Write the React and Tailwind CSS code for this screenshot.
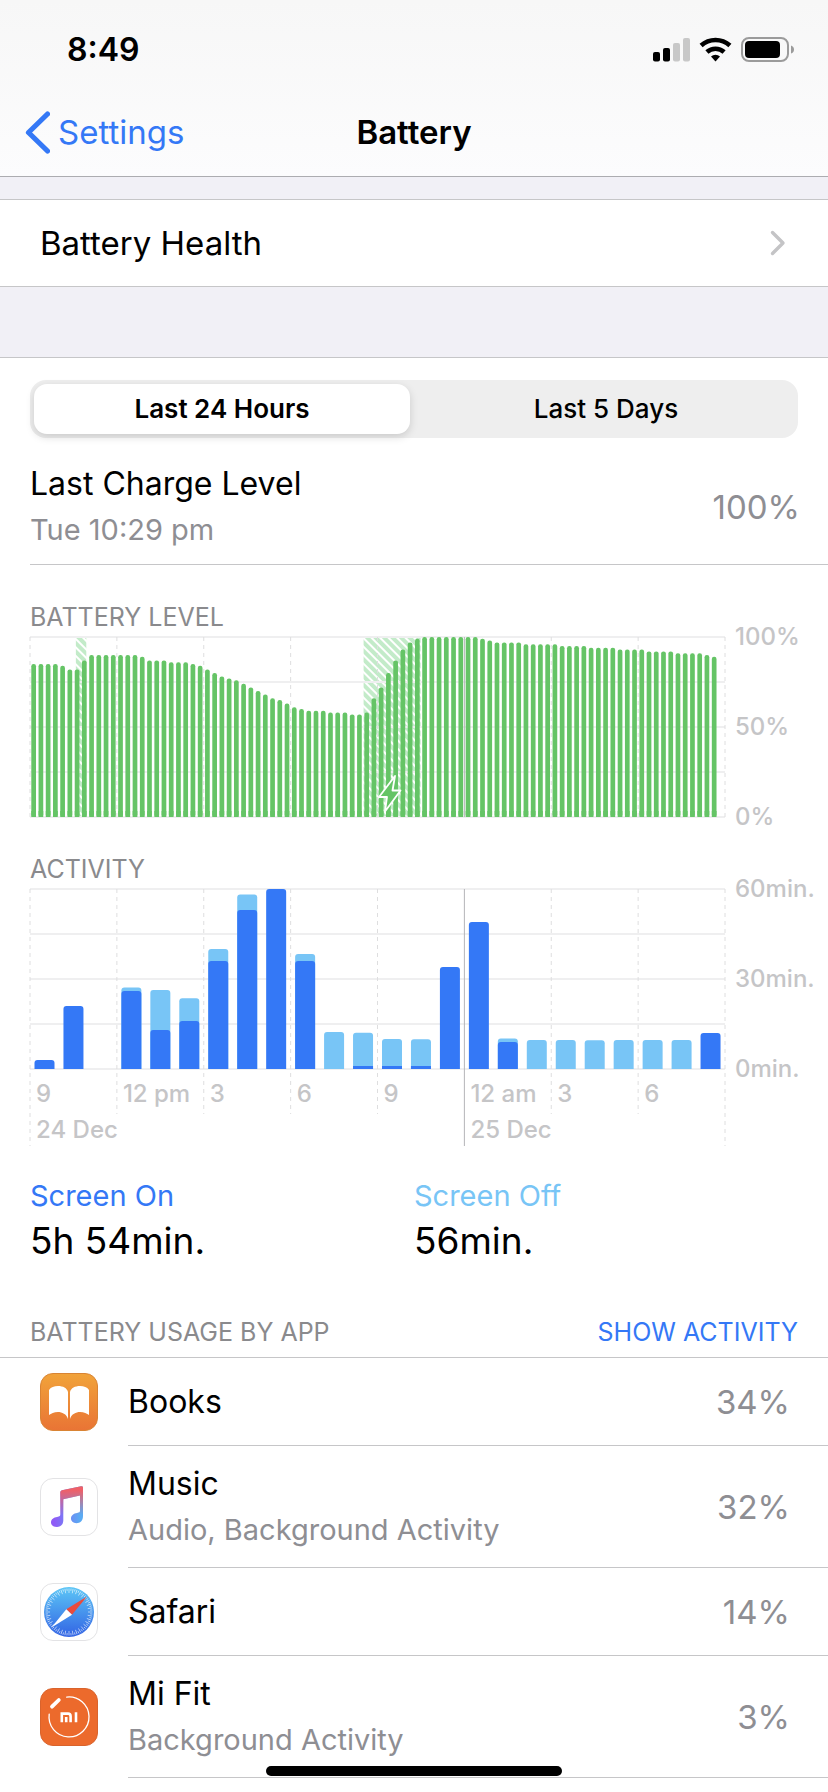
import { useState } from 'react'

// one reading every 15 minutes
const LEVELS = [
  85, 85, 85, 85, 84, 82, 82, 87, 90, 90, 90, 90, 90, 90, 90, 89,
  87, 87, 87, 86, 86, 86, 85, 84, 82, 80, 78, 77, 76, 74, 72, 70,
  68, 66, 65, 63, 61, 60, 59, 59, 59, 58, 58, 58, 57, 57, 58, 66,
  72, 80, 87, 93, 97, 99, 100, 100, 100, 100, 100, 100, 100, 100, 99, 98,
  97, 97, 97, 97, 96, 96, 96, 96, 96, 95, 95, 95, 95, 94, 94, 94,
  94, 93, 93, 93, 93, 92, 92, 92, 92, 91, 91, 91, 91, 90, 89,
]

// [screen on, total] minutes per hour
const ACTIVITY = [
  [3, 3], [21, 21], [0, 0], [26, 27.2], [13, 26.3], [16, 23.6],
  [36, 40], [53, 58.2], [60, 60], [36, 38.3], [0, 12.3], [1, 12.1],
  [1, 10], [1, 9.9], [34, 34], [49, 49], [9, 10.2], [0, 9.7],
  [0, 9.7], [0, 9.6], [0, 9.7], [0, 9.7], [0, 9.7], [12, 12],
]

const HOURS = ['9', '12 pm', '3', '6', '9', '12 am', '3', '6']
const PLOT_H = 180

function GridLines({ tick, edge }) {
  return (
    <g>
      {[0, 1, 2, 3, 4].map((i) => (
        <line key={i} x1="0" x2="100%" y1={i * 45} y2={i * 45} stroke="#efeff0" strokeWidth="2" />
      ))}
      {[0, 1, 2, 3, 4, 6, 7, 8].map((i) => (
        <line
          key={i}
          x1={`${i * 12.5}%`}
          x2={`${i * 12.5}%`}
          y1="0"
          y2={i % 8 === 0 ? edge : tick}
          stroke="#dededf"
          strokeDasharray="4 4"
        />
      ))}
      <line x1="62.5%" x2="62.5%" y1="0" y2={edge} stroke="#b4b4b8" />
    </g>
  )
}

function YLabels({ labels }) {
  return (
    <div className="-my-[14px] flex h-[208px] w-[103px] shrink-0 flex-col justify-between pl-[10px] text-[24px] leading-7 font-medium text-[#c5c5c7]">
      {labels.map((label) => <span key={label}>{label}</span>)}
    </div>
  )
}

function LevelChart() {
  return (
    <div className="mt-1 flex items-start">
      <svg className="h-[180px] min-w-0 flex-1 overflow-visible" role="img" aria-label="Battery level">
        <defs>
          <pattern id="hatch" width="6" height="6" patternUnits="userSpaceOnUse" patternTransform="rotate(-45)">
            <rect width="6" height="6" fill="#c3ebc9" />
            <rect width="2" height="6" fill="#fff" />
          </pattern>
        </defs>
        <rect x="6.6%" width="1.5%" height={PLOT_H} fill="url(#hatch)" />
        <rect x="48%" width="8.2%" height={PLOT_H} fill="url(#hatch)" />
        <GridLines tick={PLOT_H} edge={PLOT_H} />
        <g fill="#65c466" transform="translate(1.3 0)">
          {LEVELS.map((level, i) => {
            const h = (level / 100) * PLOT_H
            return (
              <g key={i}>
                <rect x={`${(i / 96) * 100}%`} y={PLOT_H - h} width="4.7" height={h} rx="2.2" />
                <rect x={`${(i / 96) * 100}%`} y={PLOT_H - 6} width="4.7" height="6" />
              </g>
            )
          })}
        </g>
        <svg x="50%" y="138" width="26" height="38" overflow="visible">
          <path
            d="M17.5 1 L1.5 22 H9.5 L7.5 36.5 L23 15.5 H15 Z"
            fill="#65c466"
            stroke="#fff"
            strokeWidth="1.8"
            strokeLinejoin="round"
          />
        </svg>
      </svg>
      <YLabels labels={['100%', '50%', '0%']} />
    </div>
  )
}

function ActivityChart() {
  return (
    <div className="mt-1 flex items-start">
      <svg className="h-[257px] min-w-0 flex-1 overflow-visible" role="img" aria-label="Activity">
        <defs>
          <clipPath id="plot">
            <rect width="100%" height={PLOT_H} />
          </clipPath>
        </defs>
        <GridLines tick={225} edge={257} />
        <g clipPath="url(#plot)">
          <g transform="translate(4.5 0)">
            {ACTIVITY.map(([on, total], i) => (
              <g key={i}>
                <rect x={`${(i / 24) * 100}%`} y={PLOT_H - total * 3} width="20" height={total && total * 3 + 6} rx="3" fill={on === total ? '#3478f6' : '#78c5f6'} />
                {on > 0 && on < total && (
                  <rect x={`${(i / 24) * 100}%`} y={PLOT_H - on * 3} width="20" height={on * 3 + 6} rx={on > 1 ? 3 : 0} fill="#3478f6" />
                )}
              </g>
            ))}
          </g>
        </g>
        <g className="fill-[#c5c5c7] text-[24px] font-medium">
          {HOURS.map((hour, i) => (
            <text key={i} x={`${i * 12.5}%`} dx="6" y="213">{hour}</text>
          ))}
          <text x="0" dx="6" y="249">24 Dec</text>
          <text x="62.5%" dx="6" y="249">25 Dec</text>
        </g>
      </svg>
      <YLabels labels={['60min.', '30min.', '0min.']} />
    </div>
  )
}

function StatusIcons() {
  return (
    <svg width="142" height="26" viewBox="0 0 142 26" aria-hidden="true">
      <rect x="0" y="15" width="7" height="9.5" rx="2" />
      <rect x="10" y="11" width="7" height="13.5" rx="2" />
      <rect x="20" y="6" width="7" height="18.5" rx="2" fill="#c8c8c8" />
      <rect x="30" y="1" width="7" height="23.5" rx="2" fill="#c8c8c8" />
      <g fill="none" stroke="#000" strokeWidth="4.6">
        <path d="M48.1 8.5 A21.5 21.5 0 0 1 76.9 8.5" />
        <path d="M53.9 15 A12.8 12.8 0 0 1 71.1 15" />
      </g>
      <path d="M62.5 24.5 L58 19.5 A6.8 6.8 0 0 1 67 19.5 Z" />
      <rect x="89" y="1" width="46" height="23" rx="7" fill="none" stroke="#9b9b9b" strokeWidth="2" />
      <rect x="92" y="4" width="35" height="17" rx="4" />
      <path d="M138 8.5 Q141 9.5 141 12.5 Q141 15.5 138 16.5 Z" fill="#9b9b9b" />
    </svg>
  )
}

function BooksIcon() {
  return (
    <svg width="58" height="58" viewBox="0 0 58 58" aria-hidden="true">
      <defs>
        <linearGradient id="books" x2="0" y2="1">
          <stop stopColor="#f1a33a" />
          <stop offset="1" stopColor="#e97435" />
        </linearGradient>
      </defs>
      <rect x="0.5" y="0.5" width="57" height="57" rx="12.5" fill="url(#books)" stroke="#d98434" />
      <g fill="#fff">
        <path d="M9 17 C11 14 14 13 18 13 C23 13 27 15 28 19 V46 C26.5 41 22 39 18 39 C14 39 11 40.5 9 42 Z" />
        <path d="M49 17 C47 14 44 13 40 13 C35 13 31 15 30 19 V46 C31.5 41 36 39 40 39 C44 39 47 40.5 49 42 Z" />
      </g>
    </svg>
  )
}

const NOTE =
  'M20.3 14.2 Q20.3 12.6 22 12.2 L41 8.3 Q43 8 43 9.6 V38 C43 43 40 45.2 36.5 45.2 C33 45.2 31 43 31 40.6 C31 37 34 35.6 37 35 C39.5 34.5 40 34 40 32.5 V17.6 L23.3 21.2 V42.5 C23.3 47 20 49 17 49 C13.3 49 11 47 11 44.5 C11 41 14 39.5 17 39 C19.8 38.4 20.3 38 20.3 36 Z'

function MusicIcon() {
  return (
    <svg width="58" height="58" viewBox="0 0 58 58" aria-hidden="true">
      <defs>
        <linearGradient id="note-base">
          <stop offset="0.1" stopColor="#8f5bf6" />
          <stop offset="0.9" stopColor="#5aaaf3" />
        </linearGradient>
        <linearGradient id="note-top" x2="0" y2="1">
          <stop offset="0.1" stopColor="#ee6069" />
          <stop offset="0.7" stopColor="#ee6069" stopOpacity="0" />
        </linearGradient>
      </defs>
      <rect x="0.5" y="0.5" width="57" height="57" rx="12.5" fill="#fff" stroke="#e3e3e5" />
      <path d={NOTE} fill="url(#note-base)" />
      <path d={NOTE} fill="url(#note-top)" />
    </svg>
  )
}

function SafariIcon() {
  return (
    <svg width="58" height="58" viewBox="0 0 58 58" aria-hidden="true">
      <defs>
        <linearGradient id="safari" x2="0" y2="1">
          <stop stopColor="#5cc6f6" />
          <stop offset="1" stopColor="#3263e4" />
        </linearGradient>
      </defs>
      <rect x="0.5" y="0.5" width="57" height="57" rx="12.5" fill="#fff" stroke="#e3e3e5" />
      <circle cx="29" cy="29" r="25" fill="url(#safari)" />
      <g stroke="#fff" strokeWidth="0.7" opacity="0.8">
        {Array.from({ length: 72 }, (_, i) => (
          <line key={i} x1="29" x2="29" y1="5.5" y2={i % 2 ? 7.8 : 10} transform={`rotate(${i * 5} 29 29)`} />
        ))}
      </g>
      <path d="M47 13.5 L32 31.8 L26.3 26.3 Z" fill="#e94b3e" />
      <path d="M11.5 44.5 L26.3 26.3 L32 31.8 Z" fill="#fff" />
    </svg>
  )
}

function MiFitIcon() {
  return (
    <svg width="58" height="58" viewBox="0 0 58 58" aria-hidden="true">
      <rect x="0.5" y="0.5" width="57" height="57" rx="12.5" fill="#ec6a2c" stroke="#d9632c" />
      <g fill="none" stroke="#fff">
        <path d="M26.7 9.1 A20 20 0 1 1 9.2 26.2" strokeWidth="1.3" strokeLinecap="round" />
        <path d="M12 18.7 L18.8 12" strokeWidth="3.8" strokeLinecap="round" />
        <path d="M21.8 34.3 V25.6 H28 Q30.6 25.6 30.6 28.2 V34.3 M26.2 29 V34.3 M36 24.3 V34.3" strokeWidth="2.6" />
      </g>
    </svg>
  )
}

const APPS = [
  { name: 'Books', usage: '34%', Icon: BooksIcon },
  { name: 'Music', detail: 'Audio, Background Activity', usage: '32%', Icon: MusicIcon },
  { name: 'Safari', usage: '14%', Icon: SafariIcon },
  { name: 'Mi Fit', detail: 'Background Activity', usage: '3%', Icon: MiFitIcon },
]

function AppRow({ name, detail, usage, Icon }) {
  return (
    <li className="flex items-stretch pl-10">
      <div className="flex items-center pr-[30px]">
        <Icon />
      </div>
      <div className={`flex flex-1 items-center justify-between border-b border-[#c6c6c8] pr-[38px] ${detail ? 'h-[122px]' : 'h-[88px]'}`}>
        <div>
          <p className="text-[32px] leading-[46px]">{name}</p>
          {detail && <p className="text-[29px] leading-[46px] text-[#8e8e93]">{detail}</p>}
        </div>
        <span className="text-[33px] leading-[46px] text-[#8e8e93]">{usage}</span>
      </div>
    </li>
  )
}

export default function App() {
  const [range, setRange] = useState('Last 24 Hours')

  return (
    <div className="min-h-screen bg-white font-['Inter','Liberation_Sans',sans-serif] text-black">
      <header className="border-b border-[#acacb0] bg-linear-to-b from-[#f7f7f7] to-[#fcfcfd]">
        <div className="flex h-[88px] items-center justify-between pt-3 pr-[33px] pl-[67px]">
          <span className="text-[32px] leading-9 font-semibold">8:49</span>
          <StatusIcons />
        </div>
        <nav className="grid h-[88px] grid-cols-[1fr_auto_1fr] items-center px-[25px]">
          <a href="#settings" className="flex items-center gap-2 text-[33px] leading-[46px] text-[#3478f6]">
            <svg width="25" height="43" viewBox="0 0 25 43" fill="none" stroke="currentColor" strokeWidth="5.2" strokeLinecap="round" strokeLinejoin="round" aria-hidden="true">
              <path d="M22.5 3 L3.5 21.5 L22.5 40" />
            </svg>
            Settings
          </a>
          <h1 className="text-[33px] leading-[46px] font-semibold">Battery</h1>
        </nav>
      </header>

      <main>
        <div className="bg-[#f1f0f6] pt-[22px] pb-[70px]">
          <a href="#health" className="flex h-[88px] items-center justify-between border-y border-[#c6c6c8] bg-white pr-[42px] pl-10 text-[33px] leading-[46px]">
            Battery Health
            <svg width="16" height="26" viewBox="0 0 16 26" fill="none" stroke="#c4c4c6" strokeWidth="3.4" strokeLinecap="round" strokeLinejoin="round" aria-hidden="true">
              <path d="M2.5 2.5 L13 13 L2.5 23.5" />
            </svg>
          </a>
        </div>

        <section className="border-t border-[#c6c6c8] pt-[22px] pl-[30px]">
          <div role="group" aria-label="Period" className="mr-[30px] grid h-[58px] grid-cols-2 gap-2 rounded-2xl bg-[#eeeeee] p-1">
            {['Last 24 Hours', 'Last 5 Days'].map((label) => (
              <button
                key={label}
                type="button"
                aria-pressed={range === label}
                onClick={() => setRange(label)}
                className={`rounded-[13px] text-[26px] leading-8 ${
                  range === label
                    ? 'bg-white font-semibold shadow-[0_3px_8px_rgba(0,0,0,0.15)]'
                    : 'font-medium'
                }`}
              >
                {label}
              </button>
            ))}
          </div>

          <div className="flex items-center justify-between border-b border-[#c6c6c8] pt-[23px] pr-[28px] pb-[11px]">
            <div>
              <p className="text-[32px] leading-[46px]">Last Charge Level</p>
              <p className="text-[29px] leading-[46px] text-[#8e8e93]">Tue 10:29 pm</p>
            </div>
            <span className="text-[33px] leading-[46px] text-[#8e8e93]">100%</span>
          </div>

          <h2 className="mt-9 text-[25px] leading-8 text-[#8a8a8d]">BATTERY LEVEL</h2>
          <LevelChart />
          <h2 className="mt-9 text-[25px] leading-8 text-[#8a8a8d]">ACTIVITY</h2>
          <ActivityChart />

          <dl className="mt-8 mr-[30px] grid grid-cols-2">
            <div>
              <dt className="text-[29px] leading-9 text-[#3478f6]">Screen On</dt>
              <dd className="text-[37px] leading-[54px]">5h 54min.</dd>
            </div>
            <div>
              <dt className="text-[29px] leading-9 text-[#78c5f6]">Screen Off</dt>
              <dd className="text-[37px] leading-[54px]">56min.</dd>
            </div>
          </dl>
        </section>

        <section>
          <div className="flex items-center justify-between border-b border-[#c6c6c8] px-[30px] pt-12 pb-[9px] text-[25px] leading-8">
            <h2 className="text-[#8a8a8d]">BATTERY USAGE BY APP</h2>
            <button type="button" className="text-[#3478f6]">SHOW ACTIVITY</button>
          </div>
          <ul>
            {APPS.map((app) => <AppRow key={app.name} {...app} />)}
          </ul>
        </section>
      </main>

      <div className="fixed bottom-4 left-1/2 h-[10px] w-[296px] -translate-x-1/2 rounded-full bg-black" />
    </div>
  )
}
